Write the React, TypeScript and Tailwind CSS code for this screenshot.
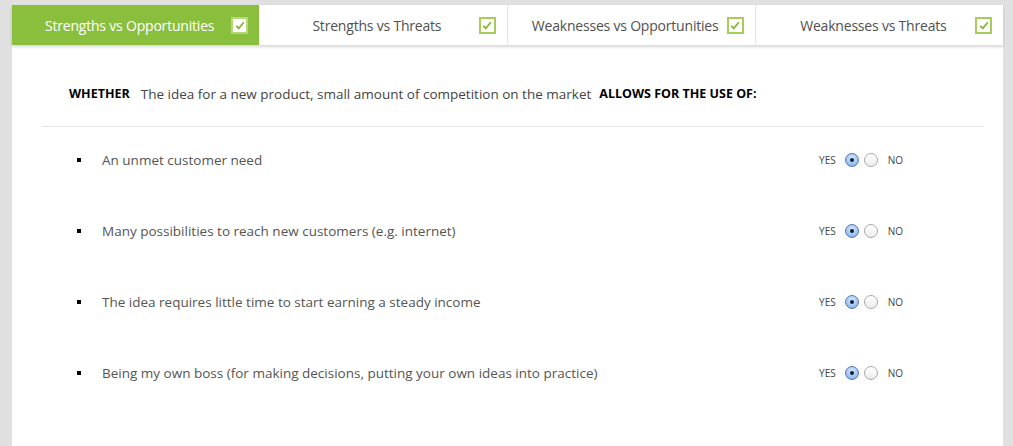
import React from "react";

const tabs = [
  { label: "Strengths vs Opportunities", active: true },
  { label: "Strengths vs Threats", active: false },
  { label: "Weaknesses vs Opportunities", active: false },
  { label: "Weaknesses vs Threats", active: false },
];

const items = [
  "An unmet customer need",
  "Many possibilities to reach new customers (e.g. internet)",
  "The idea requires little time to start earning a steady income",
  "Being my own boss (for making decisions, putting your own ideas into practice)",
];

function Check({ active }: { active: boolean }) {
  return (
    <span
      className={
        "flex h-[17px] w-[17px] shrink-0 items-center justify-center border-2 " +
        (active ? "border-[#b7d77f] bg-white" : "border-[#a9cb5a] bg-white")
      }
    >
      <svg width="10" height="9" viewBox="0 0 10 9">
        <path d="M1.2 4.8 L3.8 7.4 L8.8 1.2" fill="none" stroke="#86b83a" strokeWidth="1.8" />
      </svg>
    </span>
  );
}

function Radio({ checked }: { checked: boolean }) {
  return checked ? (
    <span className="flex h-[14px] w-[14px] shrink-0 items-center justify-center rounded-full border border-[#5b78b8] bg-[radial-gradient(circle_at_50%_35%,#dbe9fb_0%,#9cc4f2_60%,#6f9fe0_100%)]">
      <span className="block h-[4px] w-[4px] rounded-full bg-[#10203a]" />
    </span>
  ) : (
    <span className="block h-[14px] w-[14px] shrink-0 rounded-full border border-[#a8a8a8] bg-[linear-gradient(#ffffff,#ececec)]" />
  );
}

export default function App() {
  return (
    <div
      className="flex min-h-[446px] bg-[#e0e0e0] pl-[12px] pr-[10px] pt-[5px]"
      style={{ fontFamily: '"Open Sans", "Liberation Sans", sans-serif' }}
    >
      <div className="flex flex-1 flex-col bg-white">
        <div className="flex h-[40px] shadow-[0_2px_3px_rgba(0,0,0,0.16)]">
          {tabs.map((t, i) => (
            <div
              key={t.label}
              className={
                "flex flex-1 items-center pl-[16px] pr-[11px] text-[14px] " +
                (t.active
                  ? "bg-[#8abf3d] text-white"
                  : "text-[#505050] " + (i > 1 ? "border-l border-[#e6e6e6]" : ""))
              }
            >
              <span className="flex-1 text-center tracking-[-0.2px]">{t.label}</span>
              <Check active={t.active} />
            </div>
          ))}
        </div>

        <div className="ml-[30px] mr-[19px] flex flex-col">
          <div className="flex h-[20px] items-center pl-[27px] mt-[39px] text-[13.5px] text-[#444]">
            <span className="text-[12.5px] font-bold text-black">WHETHER</span>
            <span className="ml-[11px]">The idea for a new product, small amount of competition on the market</span>
            <span className="ml-[8px] text-[12.5px] font-bold text-black">ALLOWS FOR THE USE OF:</span>
          </div>
          <div className="mt-[22px] h-px bg-[#e4e4e4]" />
          <div className="flex flex-col gap-[51px] pt-[23px]">
            {items.map((it) => (
              <div key={it} className="flex h-[20px] items-center pr-[81px]">
                <span className="ml-[35px] h-[4px] w-[4px] bg-black" />
                <span className="ml-[21px] flex-1 text-[13.5px] text-[#555]">{it}</span>
                <div className="flex items-center text-[10px] text-[#444]">
                  <span>YES</span>
                  <span className="ml-[9px] flex"><Radio checked /></span>
                  <span className="ml-[5px] flex"><Radio checked={false} /></span>
                  <span className="ml-[10px]">NO</span>
                </div>
              </div>
            ))}
          </div>
        </div>
      </div>
    </div>
  );
}
